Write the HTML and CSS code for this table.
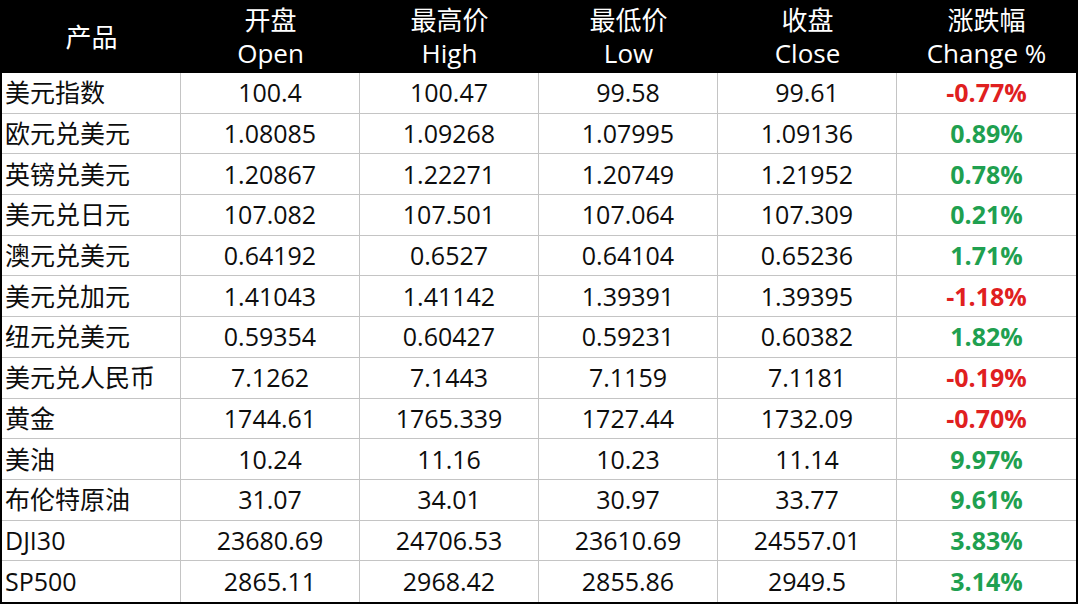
FILE: index.html
```html
<!DOCTYPE html>
<html lang="zh">
<head>
<meta charset="utf-8">
<link rel="stylesheet" href="styles.css">
</head>
<body>
<div class="grid">
  <div class="h">产品</div>
  <div class="h">开盘<br>Open</div>
  <div class="h">最高价<br>High</div>
  <div class="h">最低价<br>Low</div>
  <div class="h">收盘<br>Close</div>
  <div class="h last">涨跌幅<br>Change %</div>

  <div class="c name">美元指数</div><div class="c">100.4</div><div class="c">100.47</div><div class="c">99.58</div><div class="c">99.61</div><div class="c pct neg">-0.77%</div>
  <div class="c name">欧元兑美元</div><div class="c">1.08085</div><div class="c">1.09268</div><div class="c">1.07995</div><div class="c">1.09136</div><div class="c pct pos">0.89%</div>
  <div class="c name">英镑兑美元</div><div class="c">1.20867</div><div class="c">1.22271</div><div class="c">1.20749</div><div class="c">1.21952</div><div class="c pct pos">0.78%</div>
  <div class="c name">美元兑日元</div><div class="c">107.082</div><div class="c">107.501</div><div class="c">107.064</div><div class="c">107.309</div><div class="c pct pos">0.21%</div>
  <div class="c name">澳元兑美元</div><div class="c">0.64192</div><div class="c">0.6527</div><div class="c">0.64104</div><div class="c">0.65236</div><div class="c pct pos">1.71%</div>
  <div class="c name">美元兑加元</div><div class="c">1.41043</div><div class="c">1.41142</div><div class="c">1.39391</div><div class="c">1.39395</div><div class="c pct neg">-1.18%</div>
  <div class="c name">纽元兑美元</div><div class="c">0.59354</div><div class="c">0.60427</div><div class="c">0.59231</div><div class="c">0.60382</div><div class="c pct pos">1.82%</div>
  <div class="c name">美元兑人民币</div><div class="c">7.1262</div><div class="c">7.1443</div><div class="c">7.1159</div><div class="c">7.1181</div><div class="c pct neg">-0.19%</div>
  <div class="c name">黄金</div><div class="c">1744.61</div><div class="c">1765.339</div><div class="c">1727.44</div><div class="c">1732.09</div><div class="c pct neg">-0.70%</div>
  <div class="c name">美油</div><div class="c">10.24</div><div class="c">11.16</div><div class="c">10.23</div><div class="c">11.14</div><div class="c pct pos">9.97%</div>
  <div class="c name">布伦特原油</div><div class="c">31.07</div><div class="c">34.01</div><div class="c">30.97</div><div class="c">33.77</div><div class="c pct pos">9.61%</div>
  <div class="c name">DJI30</div><div class="c">23680.69</div><div class="c">24706.53</div><div class="c">23610.69</div><div class="c">24557.01</div><div class="c pct pos">3.83%</div>
  <div class="c name lastrow">SP500</div><div class="c lastrow">2865.11</div><div class="c lastrow">2968.42</div><div class="c lastrow">2855.86</div><div class="c lastrow">2949.5</div><div class="c pct pos lastrow">3.14%</div>
</div>
</body>
</html>
```

FILE: styles.css
```css
html, body {
  margin: 0;
  padding: 0;
  background: #fff;
}
.grid {
  box-sizing: border-box;
  width: 1078px;
  height: 604px;
  border: 2px solid #000;
  display: grid;
  grid-template-columns: 179px repeat(5, 1fr);
  grid-template-rows: 71px repeat(13, 1fr);
  font-family: "Open Sans", "Noto Sans CJK SC", sans-serif;
  font-size: 25px;
  color: #0d0d0d;
}
.h {
  background: #000;
  color: #fff;
  display: flex;
  align-items: center;
  justify-content: center;
  text-align: center;
  font-size: 26px;
  line-height: 33px;
  padding-bottom: 1px;
}
.c {
  display: flex;
  align-items: center;
  justify-content: center;
  border-right: 1px solid #c4c4c4;
  border-bottom: 1px solid #c4c4c4;
  line-height: 1;
}
.c:nth-child(6n) {
  border-right: none;
}
.c.lastrow {
  border-bottom: none;
}
.name {
  justify-content: flex-start;
  padding-left: 3px;
}
.pct {
  font-weight: 700;
}
.neg {
  color: #e0201f;
}
.pos {
  color: #1fa050;
}
```
